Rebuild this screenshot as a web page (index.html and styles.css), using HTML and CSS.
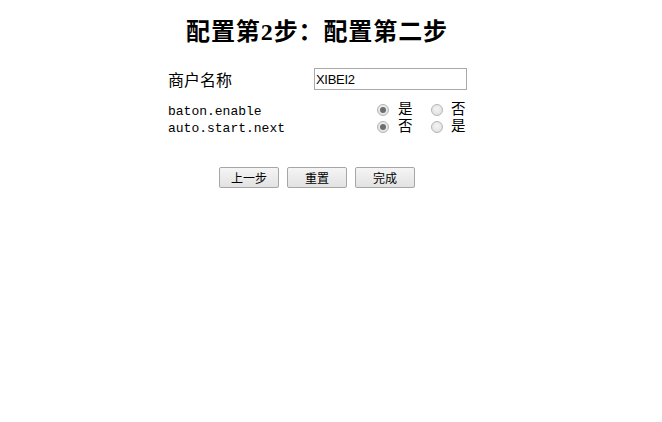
FILE: index.html
```html
<!DOCTYPE html>
<html lang="zh-CN">
<head>
<meta charset="utf-8">
<title>配置第2步</title>
<link rel="stylesheet" href="styles.css">
</head>
<body>
<div class="page">
  <h1 class="title">配置第2步：配置第二步</h1>
  <form class="form">
    <div class="row row-name">
      <span class="label cjk">商户名称</span>
      <input class="text-input" type="text" value="XIBEI2">
    </div>
    <div class="row row-opt">
      <span class="label mono">baton.enable</span>
      <span class="radios">
        <span class="radio checked"></span><span class="rlabel">是</span>
        <span class="radio second"></span><span class="rlabel">否</span>
      </span>
    </div>
    <div class="row row-opt">
      <span class="label mono">auto.start.next</span>
      <span class="radios">
        <span class="radio checked"></span><span class="rlabel">否</span>
        <span class="radio second"></span><span class="rlabel">是</span>
      </span>
    </div>
    <div class="buttons">
      <button type="button" class="btn">上一步</button>
      <button type="button" class="btn">重置</button>
      <button type="button" class="btn">完成</button>
    </div>
  </form>
</div>
</body>
</html>
```
FILE: styles.css
```css
html, body {
  margin: 0;
  padding: 0;
  background: #ffffff;
}
body {
  font-family: "Noto Sans CJK SC", "Liberation Sans", sans-serif;
  color: #000;
}
.page {
  width: 634px;
  padding-top: 18px;
}
.title {
  margin: 0;
  text-align: center;
  font-family: "Liberation Serif", "Noto Sans CJK SC", serif;
  font-size: 24px;
  line-height: 28px;
  font-weight: bold;
  letter-spacing: 0.9px;
}
.form {
  width: 300px;
  margin: 22px auto 0;
}
.row {
  display: flex;
  align-items: center;
  justify-content: space-between;
}
.row-name {
  height: 22px;
  margin-bottom: 11px;
}
.row-opt {
  height: 17px;
}
.label.cjk {
  font-size: 16px;
  line-height: 22px;
  padding-left: 1px;
}
.label.mono {
  font-family: "Liberation Mono", "DejaVu Sans Mono", monospace;
  font-size: 13px;
  line-height: 17px;
  padding-top: 4px;
  padding-left: 1px;
}
.text-input {
  box-sizing: border-box;
  width: 153px;
  height: 22px;
  margin: 0;
  border: 1px solid #a9a9a9;
  padding: 1px 1px;
  font-family: "Liberation Sans", Arial, sans-serif;
  font-size: 13px;
  color: #000;
  background: #fff;
  outline: none;
  letter-spacing: -0.3px;
}
.radios {
  display: flex;
  align-items: center;
  height: 17px;
}
.radio {
  box-sizing: border-box;
  width: 12px;
  height: 12px;
  border-radius: 50%;
  border: 1px solid #b4b4b4;
  background: radial-gradient(circle at 50% 40%, #f4f4f4 0%, #dcdcdc 100%);
  position: relative;
  margin-right: 9px;
}
.radio.checked::after {
  content: "";
  position: absolute;
  left: 2px;
  top: 2px;
  width: 6px;
  height: 6px;
  border-radius: 50%;
  background: #6e6e6e;
}
.radio.second {
  margin-left: 17px;
  margin-right: 8px;
}
.rlabel {
  display: inline-block;
  height: 17px;
  overflow: visible;
  font-family: "Liberation Sans", "Noto Sans CJK SC", sans-serif;
  font-size: 14.5px;
  line-height: 17px;
  width: 16px;
}
.buttons {
  display: flex;
  justify-content: center;
  gap: 8px;
  margin-top: 32px;
}
.btn {
  box-sizing: border-box;
  width: 60px;
  height: 21px;
  margin: 0;
  padding: 0;
  border: 1px solid #a6a6a6;
  border-radius: 2px;
  background: linear-gradient(#f5f5f5, #e2e2e2);
  font-family: "Noto Sans CJK SC", sans-serif;
  font-size: 12px;
  line-height: 19px;
  color: #000;
}
```
